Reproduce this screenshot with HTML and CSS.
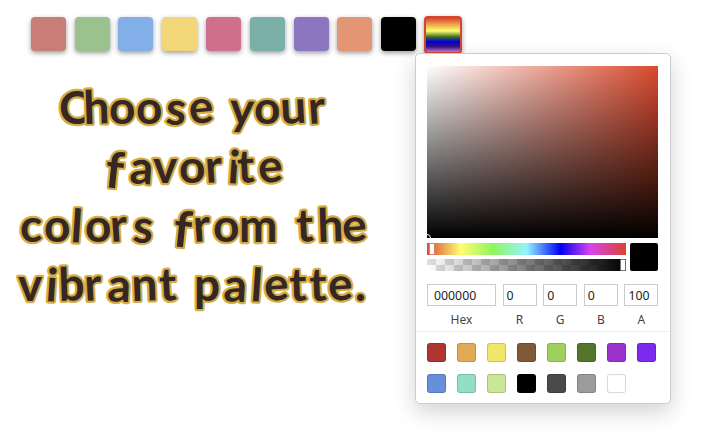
FILE: index.html
```html
<!DOCTYPE html>
<html lang="en">
<head>
<meta charset="utf-8">
<title>Palette</title>
<link rel="stylesheet" href="styles.css">
</head>
<body>
<main class="page">
  <section class="main-column">
    <div class="palette">
      <span class="chip rose"></span><span class="chip sage"></span><span class="chip sky"></span><span class="chip sun"></span><span class="chip pink"></span><span class="chip teal"></span><span class="chip violet"></span><span class="chip coral"></span><span class="chip black"></span><span class="chip rainbow"></span>
    </div>
    <svg class="headline" width="390" height="250" viewBox="0 75 390 250">
      <text y="124"><tspan x="59 84 109 136 165 190" rotate="0 -2 0 0 4 -5">Choose</tspan> <tspan x="229 254 281 309" rotate="3 0 -3 -4">your</tspan></text>
      <text y="183"><tspan class="tall" x="104" y="187" rotate="6">f</tspan><tspan x="129 153 179 206 227 238 259" y="183" rotate="4 0 0 -4 4 -3 -4">avorite</tspan></text>
      <text y="242"><tspan x="20 44 70 85 111 132" rotate="0 0 4 0 -4 4">colors</tspan> <tspan class="tall" x="172" y="246" rotate="6">f</tspan><tspan x="194 213 239" y="242" rotate="-4 0 0">rom</tspan> <tspan x="297 318 343" rotate="-3 -2 -4">the</tspan></text>
      <text y="301"><tspan x="18 45 59 85 107 132 160" rotate="0 4 -2 -3 3 -2 -3">vibrant</tspan> <tspan x="194 223 250 265 290 310 329 355" rotate="0 3 4 -4 -2 -2 -4 0">palette.</tspan></text>
    </svg>
  </section>
  <section class="picker">
    <div class="picker-main">
      <div class="spectrum"><span class="spectrum-thumb"></span></div>
      <div class="slider-row">
        <div class="sliders">
          <div class="slider hue"><span class="thumb"></span></div>
          <div class="slider alpha"><span class="thumb"></span></div>
        </div>
        <span class="preview"></span>
      </div>
      <div class="fields">
        <label><span class="value hex">000000</span>Hex</label>
        <label><span class="value">0</span>R</label>
        <label><span class="value">0</span>G</label>
        <label><span class="value">0</span>B</label>
        <label><span class="value">100</span>A</label>
      </div>
    </div>
    <div class="presets">
      <i class="c1"></i><i class="c2"></i><i class="c3"></i><i class="c4"></i><i class="c5"></i><i class="c6"></i><i class="c7"></i><i class="c8"></i><i class="c9"></i><i class="c10"></i><i class="c11"></i><i class="c12"></i><i class="c13"></i><i class="c14"></i><i class="c15"></i>
    </div>
  </section>
</main>
</body>
</html>
```
FILE: styles.css
```css
* { box-sizing: border-box; }
body { margin: 0; background: #fff; font-family: "Noto Sans", sans-serif; overflow: hidden; }
.page { position: relative; height: 435px; }
.palette { display: flex; gap: 8.8px; padding: 17px 0 0 30.8px; height: 75px; }
.chip { width: 35px; height: 34px; border-radius: 4px; box-shadow: 0 2px 5px rgba(0,0,0,.4); flex: none; }
.rose { background: #c87e76; }
.sage { background: #9bc18f; }
.sky { background: #83afe9; }
.sun { background: #f1d777; }
.pink { background: #ce6f8d; }
.teal { background: #7bb0a9; }
.violet { background: #8c76bf; }
.coral { background: #e39574; }
.black { background: #000; }
.rainbow { width: 38px; height: 38px; margin: -1px 0 0 -.6px; border: 2px solid #d5452f; background: linear-gradient(#d5452f, #e99745 16%, #ffff70 38%, #38691d 56%, #0000e6 70%, #37137a 84%, #c878dc); }
.headline { display: block; }
.headline text { font: 700 46px Lato, sans-serif; fill: #352824; stroke: #d5ad43; stroke-width: 4.4px; stroke-linejoin: round; paint-order: stroke; }
.headline .tall { font-size: 50px; }
.picker { position: absolute; left: 415px; top: 53px; width: 256px; height: 351px; background: #fff; border: 1px solid #ccc; border-radius: 5px; box-shadow: 0 8px 22px rgba(0,0,0,.18); }
.picker-main { height: 278px; padding: 12px 12px 0 11px; border-bottom: 1px solid #eee; }
.spectrum { position: relative; width: 231px; height: 172px; overflow: hidden; background: linear-gradient(transparent, #000), linear-gradient(90deg, #fff, #d94a2e); }
.spectrum-thumb { position: absolute; left: -4px; bottom: -4px; width: 8px; height: 8px; border: 1.5px solid #fff; border-radius: 50%; }
.slider-row { display: flex; gap: 4px; margin-top: 5px; }
.sliders { width: 199px; }
.slider { height: 12px; display: flex; align-items: center; }
.hue { padding-left: 2px; background: linear-gradient(90deg, #d94a37, #ffff70 17%, #91f45f 33%, #91f5ff 50%, #0000f0 67%, #d943ee 82%, #d9432f); }
.alpha { margin-top: 4px; justify-content: flex-end; background: linear-gradient(90deg, transparent, #000), repeating-conic-gradient(#fff 0 25%, #dedede 0 50%) 0 0 / 18px 12px; }
.thumb { width: 6px; height: 12px; background: #fff; border: 1px solid #777; border-radius: 1px; }
.hue .thumb { border-color: #d98066; }
.preview { width: 28px; height: 28px; border-radius: 2px; background: #000; }
.fields { display: grid; grid-template-columns: 69px 34px 34px 34px 34px; column-gap: 6.6px; margin-top: 13px; }
.fields label { font-size: 12px; line-height: 15px; text-align: center; color: #444; }
.value { display: block; width: 34px; height: 22px; margin-bottom: 6px; padding-left: 3px; border: 1px solid #ccc; text-align: left; line-height: 21px; color: #222; font-size: 12.3px; }
.value.hex { width: 69px; padding-left: 6px; }
.presets { display: grid; grid-template-columns: repeat(8, 19px); column-gap: 11.05px; row-gap: 12px; padding: 11px 0 0 11px; }
.presets i { width: 19px; height: 19px; border-radius: 3px; border: 1px solid rgba(0,0,0,.15); }
.c1 { background: #b03530; }
.c2 { background: #e1aa55; }
.c3 { background: #f2e669; }
.c4 { background: #805a37; }
.c5 { background: #9fd05b; }
.c6 { background: #53752c; }
.c7 { background: #9c32ce; }
.c8 { background: #7c2aec; }
.c9 { background: #678fda; }
.c10 { background: #92dfc4; }
.c11 { background: #c9e797; }
.c12 { background: #000; }
.c13 { background: #4a4a4a; }
.c14 { background: #9b9b9b; }
.c15 { background: #fff; }
```
